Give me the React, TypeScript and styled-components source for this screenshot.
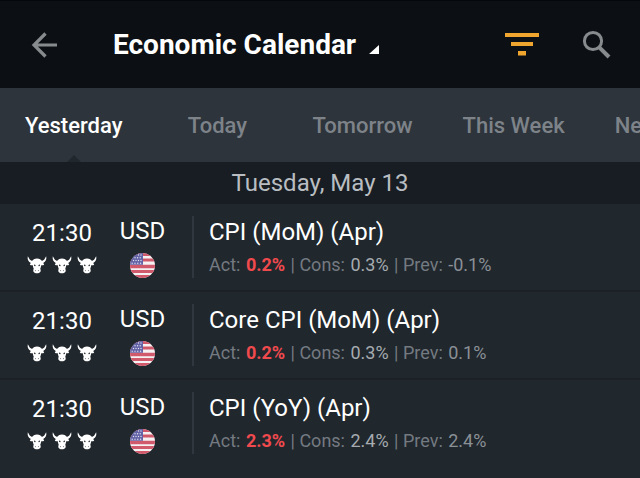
import React, { useState } from "react";
import styled, { createGlobalStyle } from "styled-components";

const GlobalStyle = createGlobalStyle`
  *, *::before, *::after { box-sizing: border-box; }
  body {
    margin: 0;
    background: #20272d;
    font-family: Roboto, "Liberation Sans", sans-serif;
    color: #ffffff;
  }
  button {
    font: inherit;
    color: inherit;
    background: none;
    border: 0;
    padding: 0;
    cursor: pointer;
  }
  svg { display: block; }
`;

const Screen = styled.div`
  display: flex;
  flex-direction: column;
  min-height: 100vh;
  overflow: hidden;
`;

const Header = styled.header`
  display: flex;
  align-items: center;
  height: 88px;
  padding: 0 26px 0 28px;
  background: #0c1014;
  border-top: 1px solid #06080b;
`;

const IconButton = styled.button<{ $tone: string }>`
  display: flex;
  align-items: center;
  justify-content: center;
  width: 36px;
  height: 36px;
  color: ${(p) => p.$tone};
`;

const Heading = styled.h1`
  flex: 1;
  margin: 0 0 0 49px;
  font-size: 28px;
  line-height: 36px;
  font-weight: 700;
`;

const TitleButton = styled.button`
  display: flex;
  align-items: baseline;
  gap: 13px;
  white-space: nowrap;
`;

const Actions = styled.div`
  display: flex;
  gap: 38px;
`;

const Tabs = styled.nav`
  display: flex;
  height: 74px;
  background: #2d343b;
  overflow: hidden;
`;

const Tab = styled.button<{ $active: boolean }>`
  position: relative;
  flex: none;
  min-width: 140px;
  padding: 2px 25px 0;
  font-size: 22px;
  line-height: 28px;
  font-weight: 500;
  color: ${(p) => (p.$active ? "#ffffff" : "#7d8389")};

  &::after {
    content: "";
    display: ${(p) => (p.$active ? "block" : "none")};
    position: absolute;
    left: 50%;
    bottom: 0;
    transform: translateX(-50%);
    border: 7px solid transparent;
    border-top-width: 0;
    border-bottom-color: #20272d;
  }
`;

const DayHeading = styled.h2`
  margin: 0;
  background: #171d23;
  color: #b9bdc1;
  font-size: 24px;
  line-height: 42px;
  font-weight: 400;
  text-align: center;
`;

const EventList = styled.ul`
  margin: 0;
  padding: 0;
  list-style: none;
`;

const EventRow = styled.li`
  display: flex;
  height: 88px;
  padding: 12px 28px 0 23px;
  border-bottom: 2px solid #1a2026;

  &:last-child { border-bottom-color: transparent; }
`;

const Cell = styled.div<{ $width: number; $top: number; $gap: number }>`
  display: flex;
  flex-direction: column;
  align-items: center;
  gap: ${(p) => p.$gap}px;
  width: ${(p) => p.$width}px;
  padding-top: ${(p) => p.$top}px;
  font-size: 24px;
  line-height: 28px;
`;

const Impact = styled.div`
  display: flex;
  gap: 5px;
`;

const Details = styled.div`
  flex: 1;
  height: 62px;
  margin-left: 8px;
  padding: 2px 0 0 15px;
  border-left: 2px solid #30373e;
`;

const EventName = styled.h3`
  margin: 0;
  font-size: 24px;
  line-height: 28px;
  font-weight: 400;
`;

const Figures = styled.p`
  margin: 8px 0 0;
  font-size: 18px;
  line-height: 22px;
  color: #747a81;
  white-space: nowrap;
`;

const Figure = styled.span<{ $kind: "actual" | "consensus" | "previous" }>`
  margin: 0 1px;
  color: ${(p) => ({ actual: "#f04a4e", consensus: "#a6abb0", previous: "#8a9096" })[p.$kind]};
  font-weight: ${(p) => (p.$kind === "actual" ? 700 : 400)};
`;

const BackIcon = () => (
  <svg width="36" height="36" viewBox="0 0 36 36" fill="none" stroke="currentColor" strokeWidth="3.2">
    <path d="M29 18H6M17.5 6.5 6 18l11.5 11.5" />
  </svg>
);

const FilterIcon = () => (
  <svg width="36" height="36" viewBox="0 0 36 36" fill="currentColor">
    <path d="M1 6h34v4H1zM7 15h22v4H7zM14 24h8v4.500h-8z" />
  </svg>
);

const SearchIcon = () => (
  <svg width="36" height="36" viewBox="0 0 36 36" fill="none" stroke="currentColor">
    <circle cx="15" cy="14" r="8.6" strokeWidth="3" />
    <path d="m21.3 20.3 9.7 9.7" strokeWidth="4" />
  </svg>
);

const CornerIcon = () => (
  <svg width="10" height="9" viewBox="0 0 10 9" fill="currentColor">
    <path d="M10 0v9H0z" />
  </svg>
);

const BullIcon = () => (
  <svg width="20" height="18" viewBox="0 0 20 18">
    <path
      fill="#fff"
      d="M.8.2C1.800 1.300 2.200 3.600 4.200 4.500C5.300 5 6 4.500 6.800 3.300C8.600 2.200 11.400 2.200 13.200 3.300C14 4.500 14.700 5 15.800 4.500C17.800 3.600 18.200 1.300 19.200.2C19.800 3.200 18.800 5.800 16.200 6.900L17.200 8.400C16.200 9.500 15.300 9.500 14.200 9.200C14.100 10.700 13.500 11.700 13.300 12.800C14.500 15.700 13 17.300 10 17.300C7 17.300 5.500 15.700 6.700 12.800C6.500 11.700 5.900 10.700 5.800 9.200C4.700 9.500 3.800 9.500 2.800 8.400L3.800 6.900C1.200 5.800.2 3.200.8.2Z"
    />
    <path fill="#20272d" d="m7 8.600 1.600.5-.3 1.200-1.100-.4zM13 8.600l-1.600.5.3 1.200 1.100-.4z" />
    <circle cx="8.500" cy="14.600" r=".6" fill="#7d8389" />
    <circle cx="11.500" cy="14.600" r=".6" fill="#7d8389" />
  </svg>
);

const STARS = [
  [8.5, 2], [11, 2],
  [5, 4.8], [7.6, 4.8], [10.2, 4.8],
  [3.5, 7.5], [6, 7.5], [8.5, 7.5], [11, 7.5],
  [2.2, 10.2], [5, 10.2], [7.8, 10.2], [10.6, 10.2],
];

const FlagIcon = ({ id }: { id: string }) => (
  <svg width="25" height="25" viewBox="0 0 25 25" role="img" aria-label="United States">
    <defs>
      <clipPath id={id}>
        <circle cx="12.500" cy="12.500" r="12.500" />
      </clipPath>
    </defs>
    <g clipPath={`url(#${id})`}>
      <path fill="#f6f1f3" d="M0 0h25v25H0z" />
      <path fill="#d0596b" d="M0 0h25v3H0zM0 5.500h25v3H0zM0 11.800h25v3.400H0zM0 17h25v3H0zM0 22h25v3H0z" />
      <path fill="#6262a6" d="M0 0h13v11.800H0z" />
      {STARS.map(([x, y]) => (
        <circle key={`${x}-${y}`} cx={x} cy={y} r=".7" fill="#e3e1f0" />
      ))}
    </g>
  </svg>
);

const TABS = ["Yesterday", "Today", "Tomorrow", "This Week", "Next Week"];

const EVENTS = [
  { name: "CPI (MoM) (Apr)", actual: "0.2%", consensus: "0.3%", previous: "-0.1%" },
  { name: "Core CPI (MoM) (Apr)", actual: "0.2%", consensus: "0.3%", previous: "0.1%" },
  { name: "CPI (YoY) (Apr)", actual: "2.3%", consensus: "2.4%", previous: "2.4%" },
];

export default function App() {
  const [active, setActive] = useState(TABS[0]);

  return (
    <>
      <GlobalStyle />
      <Screen>
        <Header>
          <IconButton $tone="#888b8e" aria-label="Back">
            <BackIcon />
          </IconButton>
          <Heading>
            <TitleButton>
              Economic Calendar
              <CornerIcon />
            </TitleButton>
          </Heading>
          <Actions>
            <IconButton $tone="#f0a52e" aria-label="Filter">
              <FilterIcon />
            </IconButton>
            <IconButton $tone="#888b8e" aria-label="Search">
              <SearchIcon />
            </IconButton>
          </Actions>
        </Header>
        <Tabs aria-label="Period">
          {TABS.map((tab) => (
            <Tab key={tab} $active={tab === active} aria-pressed={tab === active} onClick={() => setActive(tab)}>
              {tab}
            </Tab>
          ))}
        </Tabs>
        <main>
          <DayHeading>Tuesday, May 13</DayHeading>
          <EventList>
            {EVENTS.map((event, index) => (
              <EventRow key={event.name}>
                <Cell $width={78} $top={3} $gap={9}>
                  <time>21:30</time>
                  <Impact role="img" aria-label="High impact">
                    <BullIcon />
                    <BullIcon />
                    <BullIcon />
                  </Impact>
                </Cell>
                <Cell $width={83} $top={1} $gap={8}>
                  <span>USD</span>
                  <FlagIcon id={`flag-${index}`} />
                </Cell>
                <Details>
                  <EventName>{event.name}</EventName>
                  <Figures>
                    Act: <Figure $kind="actual">{event.actual}</Figure> | Cons:{" "}
                    <Figure $kind="consensus">{event.consensus}</Figure> | Prev:{" "}
                    <Figure $kind="previous">{event.previous}</Figure>
                  </Figures>
                </Details>
              </EventRow>
            ))}
          </EventList>
        </main>
      </Screen>
    </>
  );
}
